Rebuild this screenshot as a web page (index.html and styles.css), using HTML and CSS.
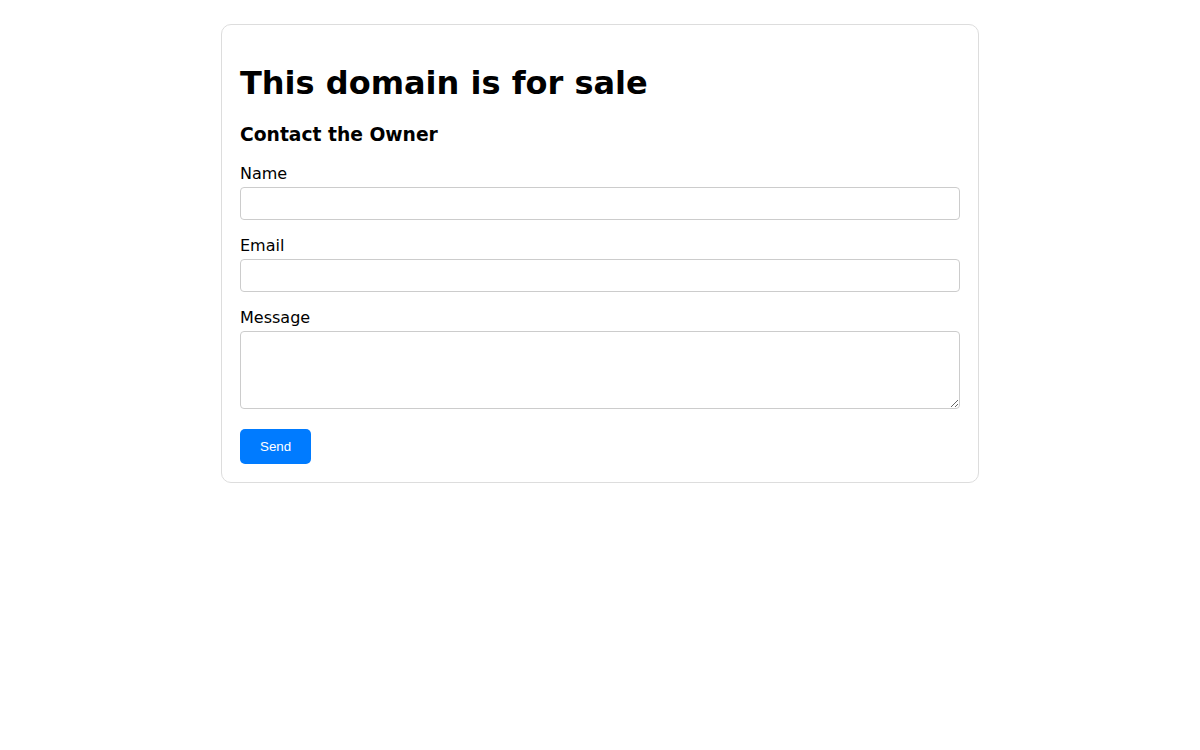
FILE: index.html
```html
<!DOCTYPE html>
<html>
<head>
<meta charset="utf-8">
<link rel="stylesheet" href="styles.css">
</head>
<body>
<div class="card">
  <h1 class="title">This domain is for sale</h1>
  <h3 class="subtitle">Contact the Owner</h3>
  <form class="form">
    <label class="label" for="name">Name</label>
    <input class="field" id="name" type="text">
    <label class="label" for="email">Email</label>
    <input class="field" id="email" type="email">
    <label class="label" for="msg">Message</label>
    <textarea class="field area" id="msg"></textarea>
    <button class="send" type="button">Send</button>
  </form>
</div>
</body>
</html>
```
FILE: styles.css
```css
html, body {
  margin: 0;
  padding: 0;
  background: #fff;
}
body {
  font-family: "DejaVu Sans", sans-serif;
  color: #000;
  padding-top: 24px;
}
.card {
  box-sizing: border-box;
  width: 758px;
  margin: 0 auto;
  border: 1px solid #dddddd;
  border-radius: 10px;
  padding: 0 18px 18px 18px;
  overflow: hidden;
}
.title {
  font-size: 32px;
  font-weight: bold;
  margin: 40px 0 0 0;
  line-height: 37px;
}
.subtitle {
  font-size: 18.72px;
  font-weight: bold;
  margin: 22px 0 0 0;
  line-height: 22px;
}
.form {
  margin-top: 18px;
}
.label {
  display: block;
  font-size: 16px;
  line-height: 19px;
  margin-bottom: 4px;
}
.field {
  display: block;
  box-sizing: border-box;
  width: 100%;
  height: 33px;
  border: 1px solid #cccccc;
  border-radius: 4px;
  margin: 0 0 16px 0;
  padding: 6px 8px;
  font-family: "DejaVu Sans", sans-serif;
  font-size: 14px;
  background: #fff;
}
.area {
  height: 78px;
  margin-bottom: 20px;
  resize: vertical;
}
.send {
  display: block;
  background: #007bff;
  color: #fff;
  border: none;
  border-radius: 5px;
  padding: 10px 20px;
  height: 35px;
  width: 71px;
  font-family: "Liberation Sans", Arial, sans-serif;
  font-size: 13.33px;
  cursor: pointer;
}
```
